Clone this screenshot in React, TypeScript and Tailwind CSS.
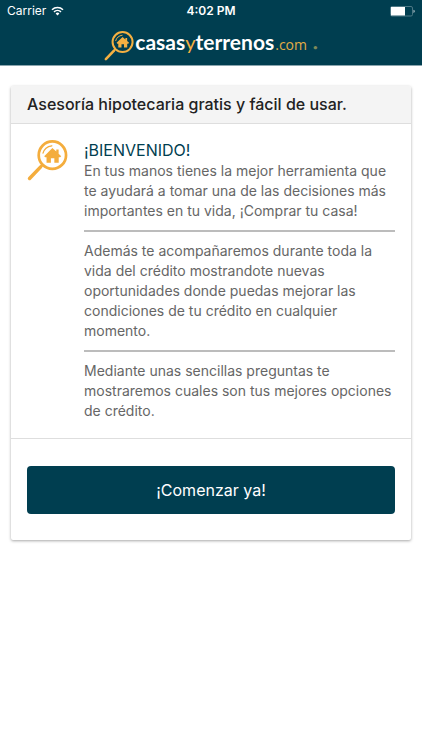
function SearchHouse({ className }: { className: string }) {
  return (
    <svg viewBox="0 0 42 42" fill="none" className={className} aria-hidden="true">
      <circle cx="26" cy="15.5" r="14" stroke="currentColor" strokeWidth="2.8" />
      <path d="M15.8 25.7 13 28.5" stroke="currentColor" strokeWidth="2.4" />
      <path d="M14 27.5 2.6 39.4" stroke="currentColor" strokeWidth="3.6" strokeLinecap="round" />
      <path d="M16.4 13.5c1-4 4.300-7 9-7.600" stroke="currentColor" strokeWidth="1.300" strokeLinecap="round" />
      <path
        d="M26 8.300 30 11.900V9.700h2.400v4.400l2.700 2.500-1.100 1.100h-1.500v5.500h-4.500v-4.600h-3.500v4.600h-4.500v-5.500h-1.300l-1.100-1.100z"
        fill="currentColor"
      />
    </svg>
  );
}

function StatusBar() {
  return (
    <div className="grid h-[22px] grid-cols-3 items-center px-[7px] text-xs text-white">
      <div className="flex items-center gap-[5px]">
        <span>Carrier</span>
        <svg viewBox="0 0 13 10" fill="none" className="h-[10px] w-[13px]" aria-label="Wi-Fi">
          <path d="M1 3.700a7.800 7.800 0 0 1 11 0M3 5.900a5 5 0 0 1 7 0" stroke="currentColor" strokeWidth="1.500" />
          <path d="M4.600 7.400a2.700 2.700 0 0 1 3.800 0L6.500 9.400z" fill="currentColor" />
        </svg>
      </div>
      <span className="text-center font-semibold">4:02 PM</span>
      <svg viewBox="0 0 25 11" fill="none" className="h-[11px] w-[25px] justify-self-end" aria-label="Battery">
        <rect x="0.500" y="0.500" width="22" height="9.500" rx="1.500" stroke="#4d7885" />
        <rect x="1" y="1" width="14" height="8.500" fill="currentColor" />
        <path d="M23.600 3.700c1.300.4 1.300 2.800 0 3.200z" fill="currentColor" />
      </svg>
    </div>
  );
}

function Logo() {
  return (
    <div className="flex items-center justify-center">
      <SearchHouse className="size-[30px] text-[#f4b042]" />
      <p className="flex items-baseline pb-1 pl-px font-[Lato,sans-serif] text-[21px] leading-6 font-bold text-white">
        casas
        <span className="text-xl font-normal text-[#f4b042]">y</span>
        terrenos
        <span className="pl-px font-['Open_Sans',sans-serif] text-sm font-normal text-[#e0ac45]">.com</span>
        <span className="pl-1.5 text-[8px] text-[#7f8a5a]">•</span>
      </p>
    </div>
  );
}

const paragraphs = [
  "En tus manos tienes la mejor herramienta que te ayudará a tomar una de las decisiones más importantes en tu vida, ¡Comprar tu casa!",
  "Además te acompañaremos durante toda la vida del crédito mostrandote nuevas oportunidades donde puedas mejorar las condiciones de tu crédito en cualquier momento.",
  "Mediante unas sencillas preguntas te mostraremos cuales son tus mejores opciones de crédito.",
];

export default function App() {
  return (
    <div className="min-h-screen bg-white font-[Inter,sans-serif]">
      <header className="h-[66px] border-b border-[#8aa5ae] bg-[#003e50]">
        <StatusBar />
        <div className="pt-[6px]">
          <Logo />
        </div>
      </header>

      <main className="px-[11px] pt-5">
        <section className="overflow-hidden rounded-xs bg-white shadow-[0_1px_3px_rgba(0,0,0,0.35)]">
          <h1 className="border-b border-[#dedede] bg-[#f4f4f4] px-4 py-[7px] text-base leading-[23px] font-medium text-[#222]">
            Asesoría hipotecaria gratis y fácil de usar.
          </h1>

          <div className="flex gap-4 border-b border-[#dedede] px-4 pt-4 pb-[17px]">
            <SearchHouse className="size-[41px] shrink-0 text-[#f4ad3d]" />
            <div className="min-w-0 flex-1">
              <h2 className="text-base leading-[21px] text-[#003e50]">¡BIENVENIDO!</h2>
              {paragraphs.map((text, i) => (
                <div key={i}>
                  {i > 0 && <hr className="my-[9px] border-t-2 border-[#bcbcbc]" />}
                  <p className="text-sm leading-5 text-[#666]">{text}</p>
                </div>
              ))}
            </div>
          </div>

          <div className="px-4 pt-[27px] pb-[26px]">
            <button
              type="button"
              className="h-12 w-full rounded bg-[#003e50] text-base text-white"
            >
              ¡Comenzar ya!
            </button>
          </div>
        </section>
      </main>
    </div>
  );
}
